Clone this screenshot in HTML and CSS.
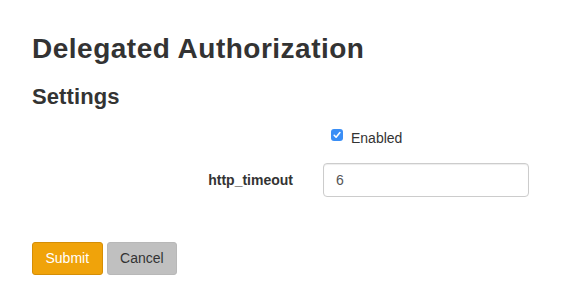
FILE: index.html
```html
<!DOCTYPE html>
<html>
<head>
<meta charset="utf-8">
<link rel="stylesheet" href="styles.css">
</head>
<body>
<div class="page">
  <h1 class="title">Delegated Authorization</h1>
  <h2 class="subtitle">Settings</h2>
  <form class="form">
    <div class="row">
      <div class="label-cell"></div>
      <label class="check">
        <span class="box"><svg width="12" height="12" viewBox="0 0 12 12"><path d="M3.2 6.3 L5.1 8.2 L8.9 3.6" fill="none" stroke="#fff" stroke-width="1.6" stroke-linecap="round" stroke-linejoin="round"/></svg></span>
        <span class="check-text">Enabled</span>
      </label>
    </div>
    <div class="row row-input">
      <label class="label-cell field-label" for="t">http_timeout</label>
      <input id="t" class="input" type="text" value="6">
    </div>
    <div class="actions">
      <button type="button" class="btn btn-submit">Submit</button>
      <button type="button" class="btn btn-cancel">Cancel</button>
    </div>
  </form>
</div>
</body>
</html>
```
FILE: styles.css
```css
html, body {
  margin: 0;
  padding: 0;
  background: #fff;
}
body {
  font-family: "Liberation Sans", Arial, sans-serif;
  font-size: 14px;
  line-height: 20px;
  color: #333;
}
.page {
  padding: 33px 32px 0 32px;
}
.title {
  margin: 0;
  font-size: 28px;
  line-height: 32px;
  font-weight: bold;
  letter-spacing: 0.5px;
  color: #333;
}
.subtitle {
  margin: 19px 0 0 0;
  font-size: 22px;
  line-height: 26px;
  font-weight: bold;
  letter-spacing: 0.1px;
  color: #333;
}
.form {
  margin: 18px 0 0 0;
}
.row {
  display: grid;
  grid-template-columns: 261px 206px;
  column-gap: 30px;
  align-items: center;
}
.row-input {
  margin-top: 15px;
}
.check {
  display: flex;
  align-items: flex-start;
  padding-left: 8px;
  height: 20px;
}
.box {
  width: 12px;
  height: 12px;
  margin-top: 1px;
  margin-right: 8px;
  border-radius: 3px;
  background: #3a8ef6;
  display: flex;
}
.check-text {
  color: #333;
}
.field-label {
  text-align: right;
  font-weight: bold;
}
.input {
  box-sizing: border-box;
  width: 206px;
  height: 34px;
  padding: 6px 12px;
  margin: 0;
  border: 1px solid #ccc;
  border-radius: 4px;
  box-shadow: inset 0 1px 1px rgba(0,0,0,0.075);
  font-family: "Liberation Sans", Arial, sans-serif;
  font-size: 14px;
  color: #555;
  outline: none;
}
.actions {
  display: flex;
  gap: 4px;
  margin-top: 45px;
}
.btn {
  box-sizing: border-box;
  height: 33px;
  padding: 6px 12.5px;
  border: 1px solid transparent;
  border-radius: 3px;
  font-family: "Liberation Sans", Arial, sans-serif;
  font-size: 14px;
  line-height: 19px;
  margin: 0;
}
.btn-submit {
  background: #f0a30a;
  border-color: #d58e06;
  color: #fff;
}
.btn-cancel {
  background: #c0c0c0;
  border-color: #b8b8b8;
  color: #333;
}
```
